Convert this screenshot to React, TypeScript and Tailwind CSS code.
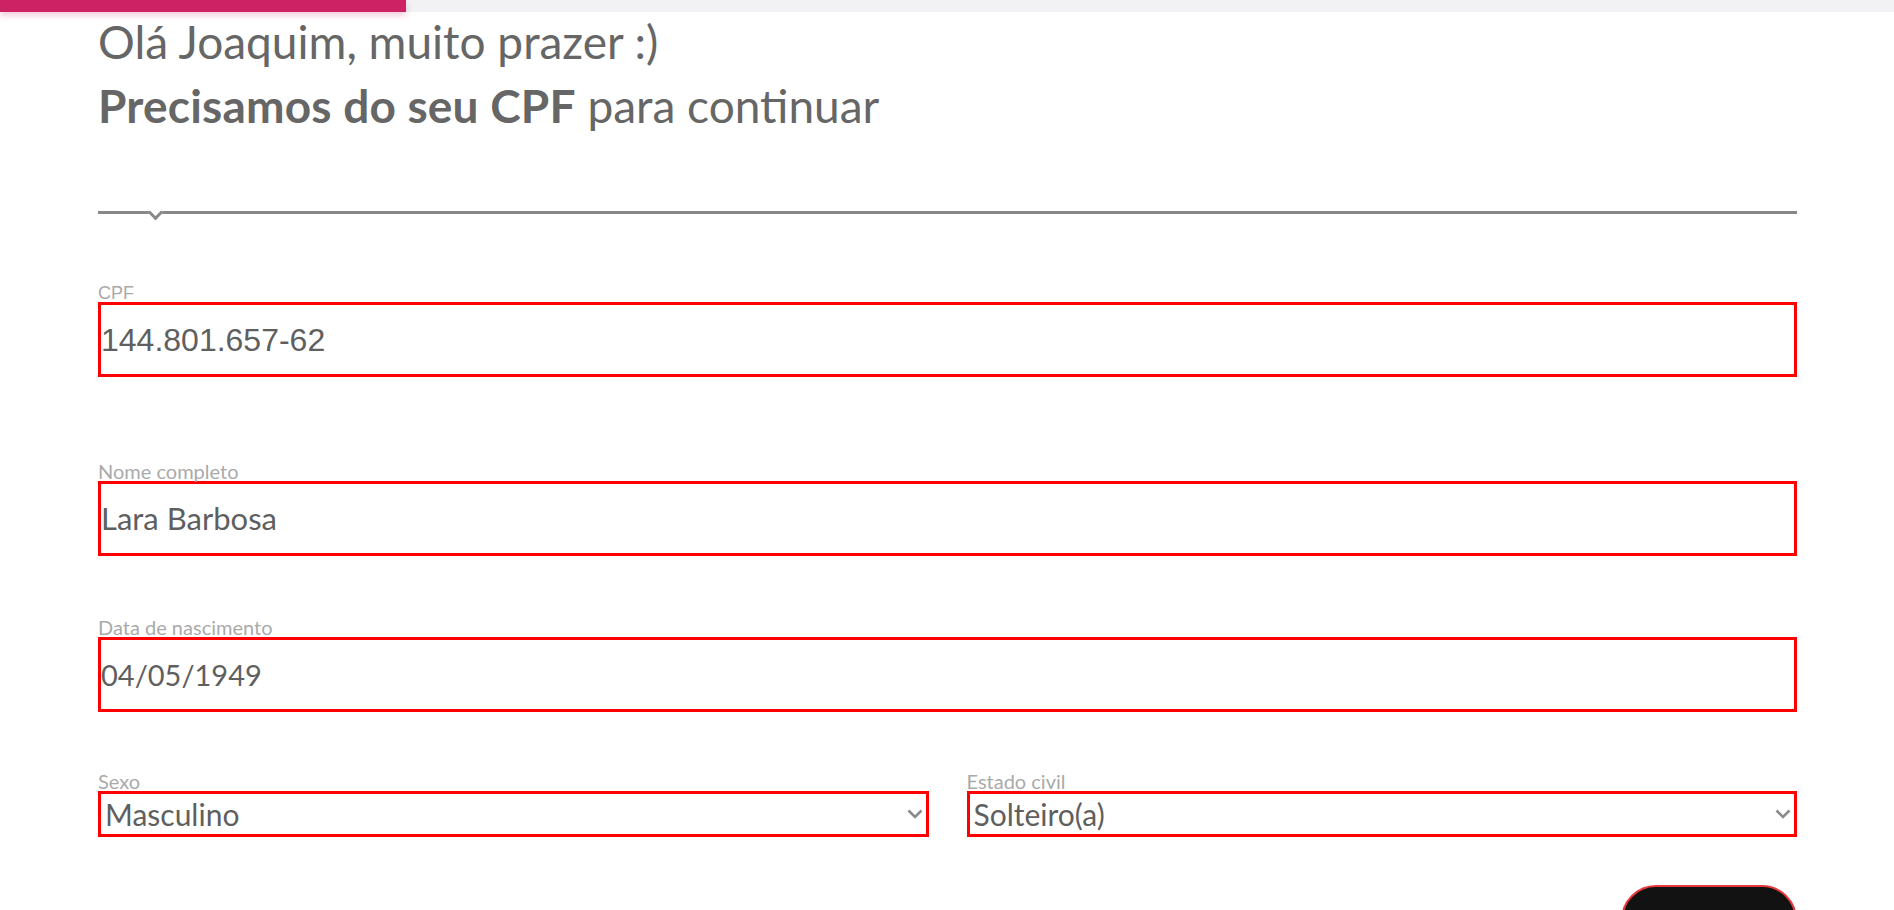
const lato = "font-['Lato',_'Open_Sans',_sans-serif]";
const arial = "font-['Liberation_Sans',_Arial,_sans-serif]";

function Chevron() {
  return (
    <svg width="16" height="10" viewBox="0 0 16 10" fill="none" className="shrink-0">
      <polyline points="1.5,1.5 8,8 14.5,1.5" stroke="#8a8a8a" strokeWidth="2.6" />
    </svg>
  );
}

function TextField({
  label,
  value,
  labelFont,
  valueClass,
  className = "",
}: {
  label: string;
  value: string;
  labelFont: string;
  valueClass: string;
  className?: string;
}) {
  return (
    <div className={className}>
      <label className={`block text-[#aaaaaa] ${labelFont}`}>{label}</label>
      <div className="flex h-[75px] items-center border-[3px] border-[#ff0000] bg-white">
        <span className={`text-[#5f5f5f] ${valueClass}`}>{value}</span>
      </div>
    </div>
  );
}

function SelectField({ label, value }: { label: string; value: string }) {
  return (
    <div className="flex-1">
      <label className={`block text-[20px] leading-[19px] text-[#aaaaaa] ${lato}`}>{label}</label>
      <div className="flex h-[46px] items-center justify-between border-[3px] border-[#ff0000] bg-white pl-[4px] pr-[3px]">
        <span className={`text-[30px] text-[#5f5f5f] ${lato}`}>{value}</span>
        <Chevron />
      </div>
    </div>
  );
}

export default function App() {
  return (
    <div className="min-h-screen bg-white">
      <div className="h-[12px] w-full bg-[#f2f2f5]">
        <div className="h-full w-[406px] bg-[#cd2264] shadow-[0_3px_6px_rgba(205,34,100,0.25)]" />
      </div>

      <main className="pl-[98px] pr-[97px]">
        <h1 className={`-mt-[2px] text-[46px] leading-[64px] text-[#666666] ${lato}`}>
          <span className="block">Olá Joaquim, muito prazer :)</span>
          <span className="block">
            <strong className="font-bold tracking-[0.2px]">Precisamos do seu CPF</strong> para continuar
          </span>
        </h1>

        <div className="relative mt-[73px] h-[3px] bg-[#888888]">
          <div className="absolute left-[52px] top-[-4px] h-[11px] w-[11px] rotate-45 border-b-[3px] border-r-[3px] border-[#888888] bg-white" />
        </div>

        <TextField
          className="mt-[71px]"
          label="CPF"
          value="144.801.657-62"
          labelFont={`text-[18px] leading-[17px] ${arial}`}
          valueClass={`text-[32px] ${arial}`}
        />

        <TextField
          className="mt-[85px]"
          label="Nome completo"
          value="Lara Barbosa"
          labelFont={`text-[20px] leading-[19px] ${lato}`}
          valueClass={`text-[31px] ${lato}`}
        />

        <TextField
          className="mt-[62px]"
          label="Data de nascimento"
          value="04/05/1949"
          labelFont={`text-[20px] leading-[19px] ${lato}`}
          valueClass={`text-[29px] ${lato}`}
        />

        <div className="mt-[60px] flex gap-[38px]">
          <SelectField label="Sexo" value="Masculino" />
          <SelectField label="Estado civil" value="Solteiro(a)" />
        </div>

        <div className="mt-[48px] flex justify-end pb-10">
          <button
            aria-label="Continuar"
            className="h-[70px] w-[176px] rounded-full border-2 border-[#e8383d] bg-[#121212]"
          />
        </div>
      </main>
    </div>
  );
}
